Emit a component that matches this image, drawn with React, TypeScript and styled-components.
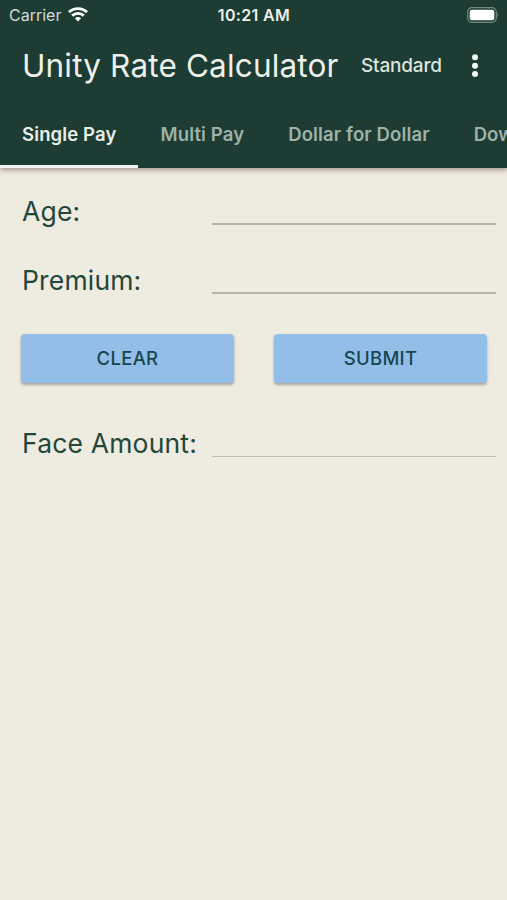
import React, { useState } from "react";
import styled, { createGlobalStyle } from "styled-components";

const green = "#1c3c34";
const cream = "#eeebe0";

const GlobalStyle = createGlobalStyle`
  *, *::before, *::after { box-sizing: border-box; }
  body { margin: 0; background: ${cream}; font-family: Inter, Roboto, sans-serif; }
`;

const Screen = styled.div`
  width: 507px;
  height: 900px;
  overflow: hidden;
  background: ${cream};
  color: #23473b;
`;

const Header = styled.header`
  height: 168px;
  background: ${green};
  color: #eef0e9;
  box-shadow: 0 2px 5px rgba(60, 35, 20, 0.42);
`;

const StatusBar = styled.div`
  display: grid;
  grid-template-columns: 1fr auto 1fr;
  align-items: center;
  height: 28px;
  padding: 1px 8px 0 9px;
  font-size: 16px;
  line-height: 20px;
`;

const Carrier = styled.div`
  display: flex;
  align-items: center;
  gap: 7px;
  color: #d3dbd6;
`;

const Clock = styled.div`
  font-weight: 600;
  letter-spacing: 0.35px;
`;

const BatteryIcon = styled.svg`
  justify-self: end;
`;

const TitleBar = styled.div`
  display: flex;
  align-items: center;
  height: 75px;
  padding: 0 22px;
`;

const Title = styled.h1`
  width: 339px;
  margin: 0;
  font-size: 31.5px;
  font-weight: 400;
  line-height: 40px;
  letter-spacing: 0.16px;
  white-space: nowrap;
`;

const RateClass = styled.span`
  width: 103px;
  font-size: 19px;
  font-weight: 500;
  letter-spacing: -0.2px;
  color: #dbe4dd;
`;

const MenuButton = styled.button`
  display: flex;
  width: 21px;
  justify-content: center;
  padding: 0;
  border: 0;
  background: none;
  color: #f6f8f6;
`;

const Tabs = styled.nav`
  display: flex;
  height: 65px;
  overflow: hidden;
`;

const Tab = styled.button<{ $active: boolean }>`
  flex: none;
  padding: 0 22px;
  border: 0;
  border-bottom: 3px solid ${(p) => (p.$active ? "#f2f3f1" : "transparent")};
  background: none;
  color: ${(p) => (p.$active ? "#e8efe9" : "#9fb2a8")};
  font: 600 18.5px/24px Inter, sans-serif;
  letter-spacing: 0.13px;
  white-space: nowrap;
`;

const Form = styled.form`
  padding: 17px 11px 0 22px;
`;

const Field = styled.label<{ $height: number }>`
  display: grid;
  grid-template-columns: 190px 284px;
  align-items: start;
  height: ${(p) => p.$height}px;
  font-size: 26.5px;
  line-height: 52px;
  letter-spacing: 0.17px;
  white-space: nowrap;
`;

const Entry = styled.input<{ $faint?: boolean }>`
  width: 100%;
  height: 40px;
  padding: 0;
  border: 0;
  border-bottom: ${(p) => (p.$faint ? "1px solid #c1bfb5" : "2px solid #b7b5aa")};
  border-radius: 0;
  outline: 0;
  background: none;
  color: inherit;
  font: inherit;
`;

const Actions = styled.div`
  display: flex;
  gap: 40px;
  height: 83px;
  margin-left: -1px;
`;

const Action = styled.button`
  width: 213px;
  height: 49px;
  padding: 0 0 1px;
  border: 0;
  border-radius: 4px;
  background: #93bee7;
  box-shadow: 0 2px 3px rgba(60, 45, 60, 0.38);
  color: #174650;
  font: 500 18.5px/24px Inter, sans-serif;
  letter-spacing: 0.3px;
`;

const tabs = ["Single Pay", "Multi Pay", "Dollar for Dollar", "Down Payment"];

export default function App() {
  const [tab, setTab] = useState(0);
  const [age, setAge] = useState("");
  const [premium, setPremium] = useState("");

  return (
    <Screen>
      <GlobalStyle />
      <Header>
        <StatusBar>
          <Carrier>
            Carrier
            <svg width="20" height="15" viewBox="0 0 20 15" fill="none" stroke="#fff" strokeWidth="2.9">
              <path d="M1 5.1C6 .4 14 .4 19 5.1" />
              <path d="M4.2 8.6c3.3-3 8.3-3 11.6 0" />
              <path d="M10 14.5l-3.1-3.2c1.8-1.6 4.4-1.6 6.2 0z" fill="#fff" stroke="none" />
            </svg>
          </Carrier>
          <Clock>10:21 AM</Clock>
          <BatteryIcon width="32" height="16" viewBox="0 0 32 16">
            <rect x="0.7" y="0.7" width="28.6" height="14.6" rx="4.2" fill="none" stroke="#758981" strokeWidth="1.2" />
            <rect x="2.7" y="2.7" width="24.6" height="10.6" rx="2.2" fill="#fff" />
            <path d="M30.5 5.5q1.6 2.5 0 5z" fill="#758981" />
          </BatteryIcon>
        </StatusBar>
        <TitleBar>
          <Title>Unity Rate Calculator</Title>
          <RateClass>Standard</RateClass>
          <MenuButton aria-label="More options">
            <svg width="8" height="24" viewBox="0 0 8 24" fill="currentColor">
              <circle cx="4" cy="3.3" r="3" />
              <circle cx="4" cy="11.7" r="3" />
              <circle cx="4" cy="20.1" r="3" />
            </svg>
          </MenuButton>
        </TitleBar>
        <Tabs>
          {tabs.map((name, i) => (
            <Tab key={name} $active={i === tab} onClick={() => setTab(i)}>
              {name}
            </Tab>
          ))}
        </Tabs>
      </Header>
      <Form onSubmit={(e) => e.preventDefault()}>
        <Field $height={69}>
          Age:
          <Entry value={age} onChange={(e) => setAge(e.target.value)} />
        </Field>
        <Field $height={80}>
          Premium:
          <Entry value={premium} onChange={(e) => setPremium(e.target.value)} />
        </Field>
        <Actions>
          <Action
            type="button"
            onClick={() => {
              setAge("");
              setPremium("");
            }}
          >
            CLEAR
          </Action>
          <Action type="submit">SUBMIT</Action>
        </Actions>
        <Field $height={60}>
          Face Amount:
          <Entry $faint readOnly />
        </Field>
      </Form>
    </Screen>
  );
}
